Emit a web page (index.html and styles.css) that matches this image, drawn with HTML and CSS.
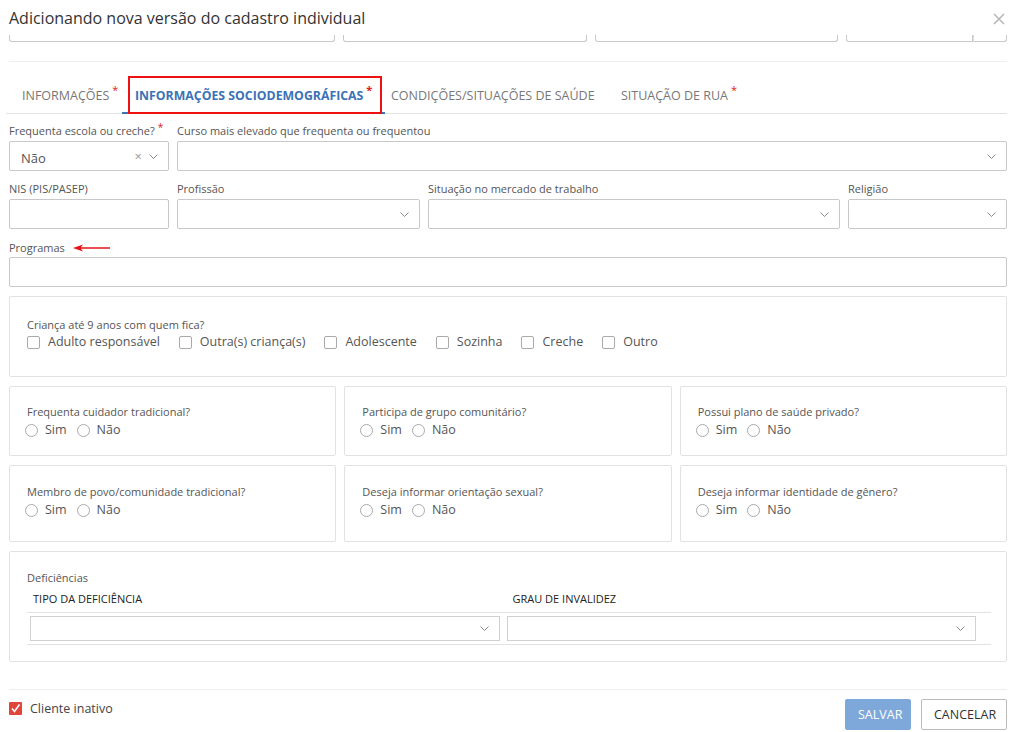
FILE: index.html
```html
<!DOCTYPE html>
<html lang="pt-BR">
<head>
<meta charset="utf-8">
<title>Adicionando nova versão do cadastro individual</title>
<link rel="stylesheet" href="styles.css">
</head>
<body>
<div class="modal">
  <div class="modal-header">
    <h1 class="modal-title">Adicionando nova versão do cadastro individual</h1>
    <svg class="close" width="12" height="12" viewBox="0 0 12 12"><path d="M1 1L11 11M11 1L1 11" stroke="#b8b8b8" stroke-width="1.6"/></svg>
  </div>
  <div class="modal-body">
    <div class="cut-row">
      <div class="cut w327"></div>
      <div class="cut w244"></div>
      <div class="cut w243"></div>
      <div class="cut-group"><div class="cut w127 sq-r"></div><div class="cut w33 sq-l"></div></div>
    </div>
    <div class="sep"></div>

    <div class="tabs">
      <div class="tab t1">INFORMAÇÕES<span class="req">*</span></div>
      <div class="tab t2 active">INFORMAÇÕES SOCIODEMOGRÁFICAS<span class="req">*</span><span class="highlight"></span></div>
      <div class="tab t3">CONDIÇÕES/SITUAÇÕES DE SAÚDE</div>
      <div class="tab t4">SITUAÇÃO DE RUA<span class="req">*</span></div>
    </div>

    <div class="row r1">
      <div class="field f160">
        <div class="label">Frequenta escola ou creche?<span class="req">*</span></div>
        <div class="input select">
          <span class="value">Não</span>
          <span class="clear">×</span>
          <svg class="caret" width="9" height="5" viewBox="0 0 9 5"><path d="M0.5 0.5L4.5 4.5L8.5 0.5" fill="none" stroke="#8a8a8a" stroke-width="1"/></svg>
        </div>
      </div>
      <div class="field grow">
        <div class="label">Curso mais elevado que frequenta ou frequentou</div>
        <div class="input select">
          <svg class="caret" width="9" height="5" viewBox="0 0 9 5"><path d="M0.5 0.5L4.5 4.5L8.5 0.5" fill="none" stroke="#8a8a8a" stroke-width="1"/></svg>
        </div>
      </div>
    </div>

    <div class="row r2">
      <div class="field f160">
        <div class="label">NIS (PIS/PASEP)</div>
        <div class="input"></div>
      </div>
      <div class="field f244">
        <div class="label">Profissão</div>
        <div class="input select">
          <svg class="caret" width="9" height="5" viewBox="0 0 9 5"><path d="M0.5 0.5L4.5 4.5L8.5 0.5" fill="none" stroke="#8a8a8a" stroke-width="1"/></svg>
        </div>
      </div>
      <div class="field grow">
        <div class="label">Situação no mercado de trabalho</div>
        <div class="input select">
          <svg class="caret" width="9" height="5" viewBox="0 0 9 5"><path d="M0.5 0.5L4.5 4.5L8.5 0.5" fill="none" stroke="#8a8a8a" stroke-width="1"/></svg>
        </div>
      </div>
      <div class="field f159">
        <div class="label">Religião</div>
        <div class="input select">
          <svg class="caret" width="9" height="5" viewBox="0 0 9 5"><path d="M0.5 0.5L4.5 4.5L8.5 0.5" fill="none" stroke="#8a8a8a" stroke-width="1"/></svg>
        </div>
      </div>
    </div>

    <div class="row r3">
      <div class="field grow">
        <div class="label prog">Programas
          <svg class="arrow" width="38" height="8" viewBox="0 0 38 8"><path d="M0 4L10 0.5L8 3.2H37V4.8H8L10 7.5Z" fill="#e5141b"/></svg>
        </div>
        <div class="input"></div>
      </div>
    </div>

    <div class="panel p-crianca">
      <div class="plabel">Criança até 9 anos com quem fica?</div>
      <div class="checks">
        <label class="chk"><span class="box"></span>Adulto responsável</label>
        <label class="chk"><span class="box"></span>Outra(s) criança(s)</label>
        <label class="chk"><span class="box"></span>Adolescente</label>
        <label class="chk"><span class="box"></span>Sozinha</label>
        <label class="chk"><span class="box"></span>Creche</label>
        <label class="chk"><span class="box"></span>Outro</label>
      </div>
    </div>

    <div class="grid3 g1">
      <div class="panel qp">
        <div class="plabel">Frequenta cuidador tradicional?</div>
        <div class="radios"><span class="rad"><span class="circle"></span>Sim</span><span class="rad"><span class="circle"></span>Não</span></div>
      </div>
      <div class="panel qp">
        <div class="plabel">Participa de grupo comunitário?</div>
        <div class="radios"><span class="rad"><span class="circle"></span>Sim</span><span class="rad"><span class="circle"></span>Não</span></div>
      </div>
      <div class="panel qp">
        <div class="plabel">Possui plano de saúde privado?</div>
        <div class="radios"><span class="rad"><span class="circle"></span>Sim</span><span class="rad"><span class="circle"></span>Não</span></div>
      </div>
    </div>

    <div class="grid3 g2">
      <div class="panel qp">
        <div class="plabel">Membro de povo/comunidade tradicional?</div>
        <div class="radios"><span class="rad"><span class="circle"></span>Sim</span><span class="rad"><span class="circle"></span>Não</span></div>
      </div>
      <div class="panel qp">
        <div class="plabel">Deseja informar orientação sexual?</div>
        <div class="radios"><span class="rad"><span class="circle"></span>Sim</span><span class="rad"><span class="circle"></span>Não</span></div>
      </div>
      <div class="panel qp">
        <div class="plabel">Deseja informar identidade de gênero?</div>
        <div class="radios"><span class="rad"><span class="circle"></span>Sim</span><span class="rad"><span class="circle"></span>Não</span></div>
      </div>
    </div>

    <div class="panel p-def">
      <div class="plabel">Deficiências</div>
      <div class="dtable">
        <div class="dhead">
          <div class="dcol">TIPO DA DEFICIÊNCIA</div>
          <div class="dcol">GRAU DE INVALIDEZ</div>
        </div>
        <div class="drow">
          <div class="dsel">
            <svg class="caret" width="9" height="5" viewBox="0 0 9 5"><path d="M0.5 0.5L4.5 4.5L8.5 0.5" fill="none" stroke="#8a8a8a" stroke-width="1"/></svg>
          </div>
          <div class="dsel">
            <svg class="caret" width="9" height="5" viewBox="0 0 9 5"><path d="M0.5 0.5L4.5 4.5L8.5 0.5" fill="none" stroke="#8a8a8a" stroke-width="1"/></svg>
          </div>
        </div>
      </div>
    </div>
  </div>

  <div class="modal-footer">
    <label class="inativo">
      <span class="checked"><svg width="13" height="13" viewBox="0 0 13 13"><path d="M3 6.5L5.5 9.5L10.5 2.5" fill="none" stroke="#fff" stroke-width="1.6"/></svg></span>
      Cliente inativo
    </label>
    <div class="buttons">
      <button class="btn btn-primary">SALVAR</button>
      <button class="btn btn-default">CANCELAR</button>
    </div>
  </div>
</div>
</body>
</html>
```

FILE: styles.css
```css
* { box-sizing: border-box; }
html, body { margin: 0; padding: 0; background: #fff; }
body { font-family: "Open Sans", "Liberation Sans", sans-serif; color: #555; }

.modal { width: 1012px; height: 732px; overflow: hidden; background: #fff; }

.modal-header {
  height: 35px;
  padding: 0 7px 0 9px;
  display: flex;
  align-items: center;
  justify-content: space-between;
}
.modal-title { margin: 0; font-size: 16px; font-weight: 400; color: #333; line-height: 38px; }
.close { margin-top: 3px; }

.modal-body { padding: 0 5px 0 9px; }

.cut-row { display: flex; gap: 8px; height: 7px; }
.cut { height: 7px; border: 1px solid #c8c8c8; border-top: none; border-radius: 0 0 3px 3px; }
.cut-group { display: flex; }
.sq-r { border-bottom-right-radius: 0; }
.sq-l { border-left-color: #ddd; border-bottom-left-radius: 0; }
.w327 { width: 327px; }
.w244 { width: 244px; }
.w243 { width: 244px; }
.w127 { width: 127px; }
.w33 { width: 34px; }

.sep { margin-top: 19px; border-top: 1px solid #eee; }

.tabs {
  display: flex;
  margin-left: -3px;
  border-bottom: 1px solid #e3e3e3;
  height: 52px;
}
.tab {
  position: relative;
  font-size: 12.5px;
  color: #777;
  padding: 25px 0 0;
  line-height: 18px;
  white-space: nowrap;
}
.tab .req { color: #e02020; font-size: 11px; position: relative; top: -6px; margin-left: 3px; }
.t1 { padding-left: 16px; width: 116px; }
.t2 { padding-left: 13px; width: 263px; color: #3b72b5; font-weight: 700; font-size: 12.3px; border-bottom: 2px solid #3b72b5; margin-bottom: -1px; }
.t3 { padding-left: 6px; width: 236px; }
.t4 { padding-left: 0; }
.highlight {
  position: absolute;
  left: 6px; top: 14px;
  width: 254px; height: 38px;
  border: 2px solid #ee1111;
}

.row { display: flex; gap: 8px; }
.r1 { margin-top: 9px; }
.r2 { margin-top: 10px; }
.r3 { margin-top: 10px; }
.field { display: flex; flex-direction: column; }
.f160 { width: 160px; flex: none; }
.f159 { width: 159px; flex: none; }
.f244 { width: 243px; flex: none; }
.grow { flex: 1; }
.label { font-size: 11px; line-height: 15px; color: #555; height: 17px; white-space: nowrap; }
.label .req { color: #e02020; font-size: 10px; position: relative; top: -4px; margin-left: 3px; }
.input {
  height: 30px;
  border: 1px solid #c8c8c8;
  border-radius: 2px;
  position: relative;
  display: flex;
  align-items: center;
  padding: 0 10px 0 11px;
  margin-top: 1px;
}
.select .caret { margin-left: auto; }
.value { font-size: 13px; color: #555; padding-top: 3px; }
.clear { margin-left: auto; font-size: 13px; color: #999; margin-right: 7px; }
.clear + .caret { margin-left: 0; }

.prog { display: flex; align-items: center; gap: 8px; }
.arrow { margin-top: 1px; }

.panel { border: 1px solid #e2e2e2; border-radius: 2px; }
.plabel { font-size: 11px; line-height: 15px; color: #555; }

.p-crianca { margin-top: 9px; height: 81px; padding: 20px 17px 0; }
.checks { display: flex; margin-top: 1px; }
.chk { display: flex; align-items: center; font-size: 12.5px; color: #555; line-height: 18px; margin-right: 19px; }
.box { width: 13px; height: 13px; border: 1px solid #aaa; border-radius: 2px; margin-right: 8px; flex: none; }

.grid3 { display: grid; grid-template-columns: 1fr 1fr 1fr; gap: 8px; }
.g1 { margin-top: 9px; }
.g1 .panel { height: 70px; }
.g2 { margin-top: 9px; }
.g2 .panel { height: 77px; }
.qp { padding: 18px 17px 0; }
.g1 .qp { padding-top: 17px; }
.g2 .qp { padding-top: 18px; }
.radios { display: flex; margin-top: 2px; margin-left: -2px; }
.rad { display: flex; align-items: center; font-size: 12.5px; color: #555; line-height: 18px; margin-right: 10px; }
.circle { width: 13px; height: 13px; border: 1px solid #aaa; border-radius: 50%; margin-right: 7px; flex: none; }

.p-def { margin-top: 9px; height: 111px; padding: 18px 15px 0 17px; }
.dtable { margin-top: 5px; }
.dhead { display: flex; border-bottom: 1px solid #e2e2e2; height: 23px; }
.dcol { flex: 1; font-size: 11px; color: #222; line-height: 18px; padding-left: 6px; }
.dhead .dcol:last-child { padding-left: 1px; }
.drow { display: flex; gap: 7px; padding: 3px 15px 3px 3px; border-bottom: 1px solid #e2e2e2; }
.dsel {
  flex: 1; height: 25px; border: 1px solid #d0d0d0;
  display: flex; align-items: center; justify-content: flex-end; padding-right: 10px;
}

.modal-footer {
  margin: 27px 5px 0 9px;
  border-top: 1px solid #eee;
  padding-top: 9px;
  display: flex;
  justify-content: space-between;
  align-items: flex-start;
}
.inativo { display: flex; align-items: center; font-size: 12.5px; color: #444; margin-top: 1px; }
.checked { width: 13px; height: 13px; background: #e0463a; border-radius: 1px; margin-right: 8px; display: flex; }
.buttons { display: flex; gap: 10px; }
.btn { font-family: inherit; font-size: 12.5px; height: 31px; border-radius: 2px; cursor: pointer; padding: 0 12px; }
.btn-primary { background: #7ea8d9; color: #fff; border: 1px solid #7ea8d9; width: 66px; }
.btn-default { background: #fff; color: #333; border: 1px solid #bbb; width: 86px; }
```
